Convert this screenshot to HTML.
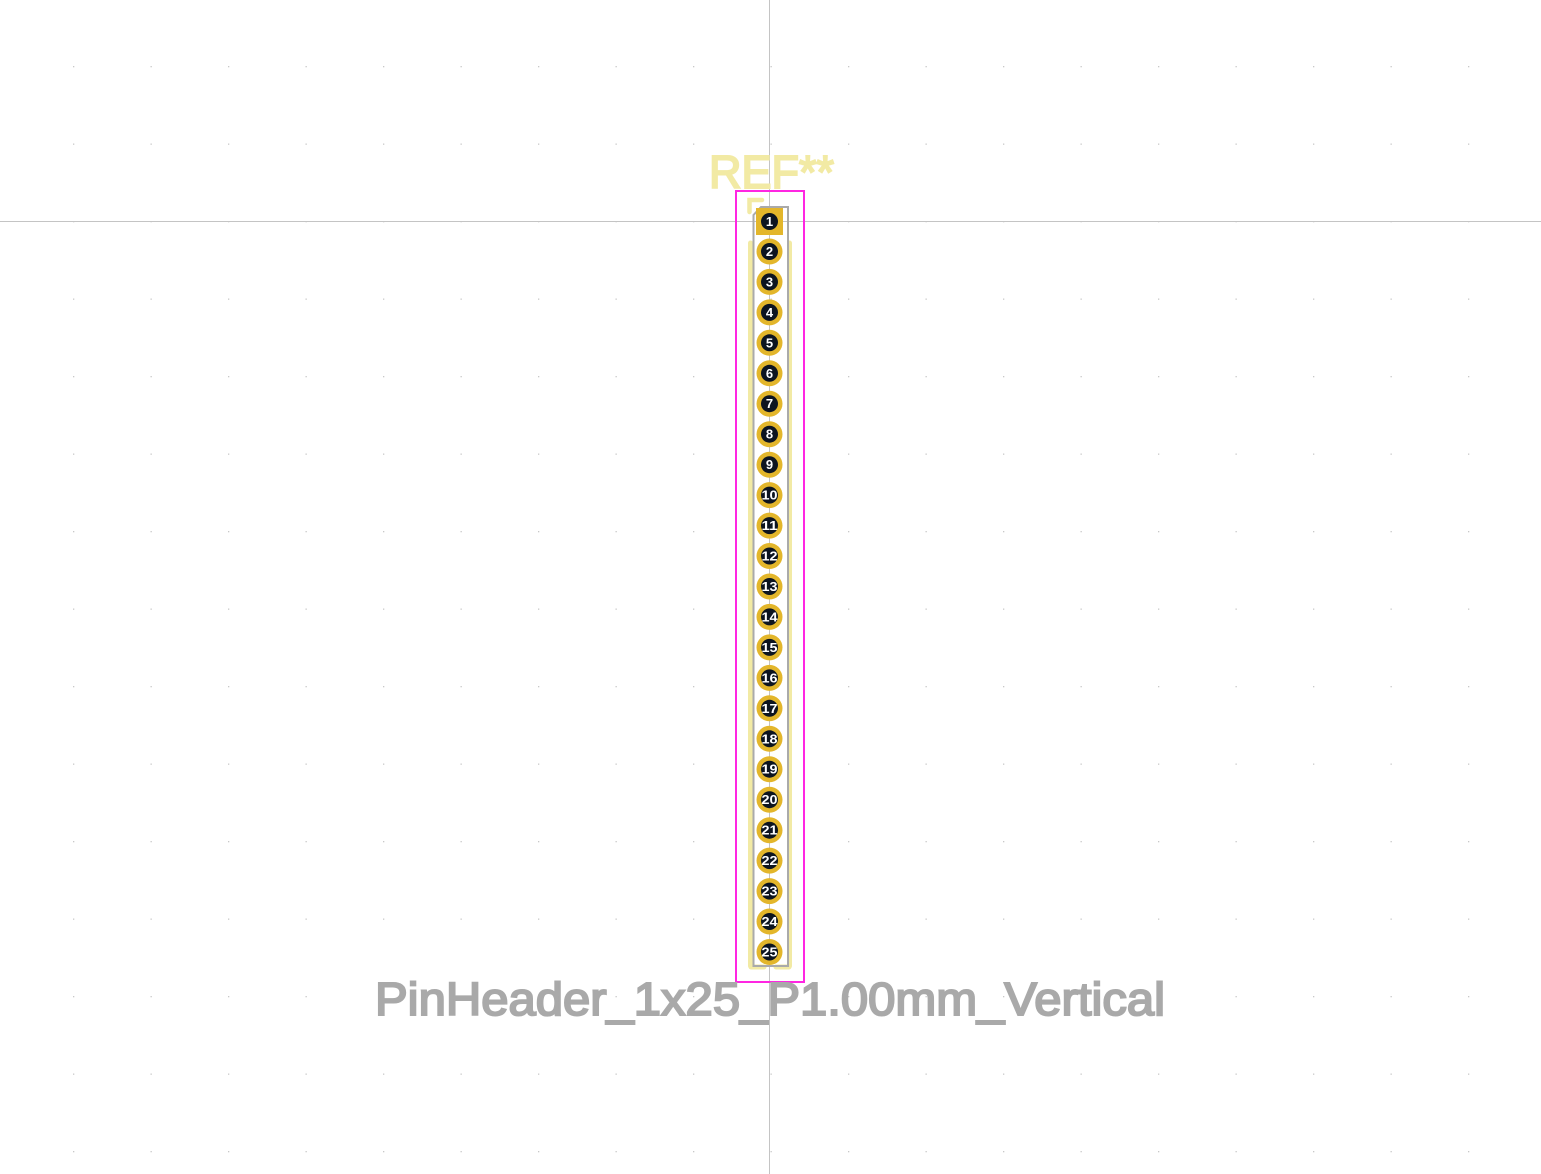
<!DOCTYPE html>
<html><head><style>html,body{margin:0;padding:0;background:#fff;}svg{display:block}</style></head>
<body>
<svg width="1541" height="1174" viewBox="0 0 1541 1174" xmlns="http://www.w3.org/2000/svg">
<defs>
<pattern id="g" x="73" y="66" width="77.5" height="77.5" patternUnits="userSpaceOnUse">
<rect x="0" y="0" width="1.3" height="1.3" fill="#c8c8c8"/>
</pattern>
</defs>
<rect width="1541" height="1174" fill="#fff"/>
<rect width="1541" height="1174" fill="url(#g)"/>
<line x1="769.5" y1="0" x2="769.5" y2="1174" stroke="#c4c4c4" stroke-width="1"/>
<line x1="0" y1="221.5" x2="1541" y2="221.5" stroke="#c4c4c4" stroke-width="1"/>
<text x="709" y="188" font-family="Liberation Sans, sans-serif" font-size="46" fill="#f2eaa4" stroke="#f2eaa4" stroke-width="2" textLength="125" lengthAdjust="spacingAndGlyphs">REF**</text>
<rect x="736" y="191" width="68" height="791" fill="none" stroke="#ff26e2" stroke-width="2"/>
<path d="M749.5 212 V200 H762" fill="none" stroke="#f2eaa4" stroke-width="4.5" stroke-linecap="round"/>
<line x1="750.5" y1="243" x2="750.5" y2="966" stroke="#f2eaa4" stroke-width="5" stroke-linecap="round"/>
<line x1="789.5" y1="243" x2="789.5" y2="966" stroke="#f2eaa4" stroke-width="5" stroke-linecap="round"/>
<line x1="751" y1="967" x2="764" y2="967" stroke="#f2eaa4" stroke-width="5" stroke-linecap="round"/>
<line x1="776" y1="967" x2="789" y2="967" stroke="#f2eaa4" stroke-width="5" stroke-linecap="round"/>
<path d="M753.5 966 V215 L761 207 H788 V966 Z" fill="none" stroke="#aaaaaa" stroke-width="2"/>
<g fill="#e3b62b">
<rect x="756" y="208" width="27" height="27"/>
<circle cx="769.5" cy="251.5" r="13"/><circle cx="769.5" cy="281.9" r="13"/><circle cx="769.5" cy="312.4" r="13"/><circle cx="769.5" cy="342.8" r="13"/><circle cx="769.5" cy="373.3" r="13"/><circle cx="769.5" cy="403.7" r="13"/><circle cx="769.5" cy="434.2" r="13"/><circle cx="769.5" cy="464.7" r="13"/><circle cx="769.5" cy="495.1" r="13"/><circle cx="769.5" cy="525.6" r="13"/><circle cx="769.5" cy="556" r="13"/><circle cx="769.5" cy="586.5" r="13"/><circle cx="769.5" cy="616.9" r="13"/><circle cx="769.5" cy="647.4" r="13"/><circle cx="769.5" cy="677.9" r="13"/><circle cx="769.5" cy="708.3" r="13"/><circle cx="769.5" cy="738.8" r="13"/><circle cx="769.5" cy="769.2" r="13"/><circle cx="769.5" cy="799.7" r="13"/><circle cx="769.5" cy="830.2" r="13"/><circle cx="769.5" cy="860.6" r="13"/><circle cx="769.5" cy="891.1" r="13"/><circle cx="769.5" cy="921.5" r="13"/><circle cx="769.5" cy="952" r="13"/>
</g>
<g fill="#0c1420">
<circle cx="769.5" cy="221.5" r="8.5"/><circle cx="769.5" cy="251.5" r="8.5"/><circle cx="769.5" cy="281.9" r="8.5"/><circle cx="769.5" cy="312.4" r="8.5"/><circle cx="769.5" cy="342.8" r="8.5"/><circle cx="769.5" cy="373.3" r="8.5"/><circle cx="769.5" cy="403.7" r="8.5"/><circle cx="769.5" cy="434.2" r="8.5"/><circle cx="769.5" cy="464.7" r="8.5"/><circle cx="769.5" cy="495.1" r="8.5"/><circle cx="769.5" cy="525.6" r="8.5"/><circle cx="769.5" cy="556" r="8.5"/><circle cx="769.5" cy="586.5" r="8.5"/><circle cx="769.5" cy="616.9" r="8.5"/><circle cx="769.5" cy="647.4" r="8.5"/><circle cx="769.5" cy="677.9" r="8.5"/><circle cx="769.5" cy="708.3" r="8.5"/><circle cx="769.5" cy="738.8" r="8.5"/><circle cx="769.5" cy="769.2" r="8.5"/><circle cx="769.5" cy="799.7" r="8.5"/><circle cx="769.5" cy="830.2" r="8.5"/><circle cx="769.5" cy="860.6" r="8.5"/><circle cx="769.5" cy="891.1" r="8.5"/><circle cx="769.5" cy="921.5" r="8.5"/><circle cx="769.5" cy="952" r="8.5"/>
</g>
<g fill="#ffffff" font-family="Liberation Sans, sans-serif" font-size="13" font-weight="bold" text-anchor="middle">
<text x="769.5" y="226">1</text><text x="769.5" y="256">2</text><text x="769.5" y="286.4">3</text><text x="769.5" y="316.9">4</text><text x="769.5" y="347.3">5</text><text x="769.5" y="377.8">6</text><text x="769.5" y="408.2">7</text><text x="769.5" y="438.7">8</text><text x="769.5" y="469.2">9</text>
<text x="769.5" y="499.6" textLength="16" lengthAdjust="spacingAndGlyphs">10</text><text x="769.5" y="530.1" textLength="16" lengthAdjust="spacingAndGlyphs">11</text><text x="769.5" y="560.5" textLength="16" lengthAdjust="spacingAndGlyphs">12</text><text x="769.5" y="591" textLength="16" lengthAdjust="spacingAndGlyphs">13</text><text x="769.5" y="621.4" textLength="16" lengthAdjust="spacingAndGlyphs">14</text><text x="769.5" y="651.9" textLength="16" lengthAdjust="spacingAndGlyphs">15</text><text x="769.5" y="682.4" textLength="16" lengthAdjust="spacingAndGlyphs">16</text><text x="769.5" y="712.8" textLength="16" lengthAdjust="spacingAndGlyphs">17</text><text x="769.5" y="743.3" textLength="16" lengthAdjust="spacingAndGlyphs">18</text><text x="769.5" y="773.7" textLength="16" lengthAdjust="spacingAndGlyphs">19</text><text x="769.5" y="804.2" textLength="16" lengthAdjust="spacingAndGlyphs">20</text><text x="769.5" y="834.7" textLength="16" lengthAdjust="spacingAndGlyphs">21</text><text x="769.5" y="865.1" textLength="16" lengthAdjust="spacingAndGlyphs">22</text><text x="769.5" y="895.6" textLength="16" lengthAdjust="spacingAndGlyphs">23</text><text x="769.5" y="926" textLength="16" lengthAdjust="spacingAndGlyphs">24</text><text x="769.5" y="956.5" textLength="16" lengthAdjust="spacingAndGlyphs">25</text>
</g>
<text x="375" y="1015" font-family="Liberation Sans, sans-serif" font-size="46" fill="#a9a9a9" stroke="#a9a9a9" stroke-width="2" textLength="790" lengthAdjust="spacingAndGlyphs">PinHeader_1x25_P1.00mm_Vertical</text>
</svg>
</body></html>
